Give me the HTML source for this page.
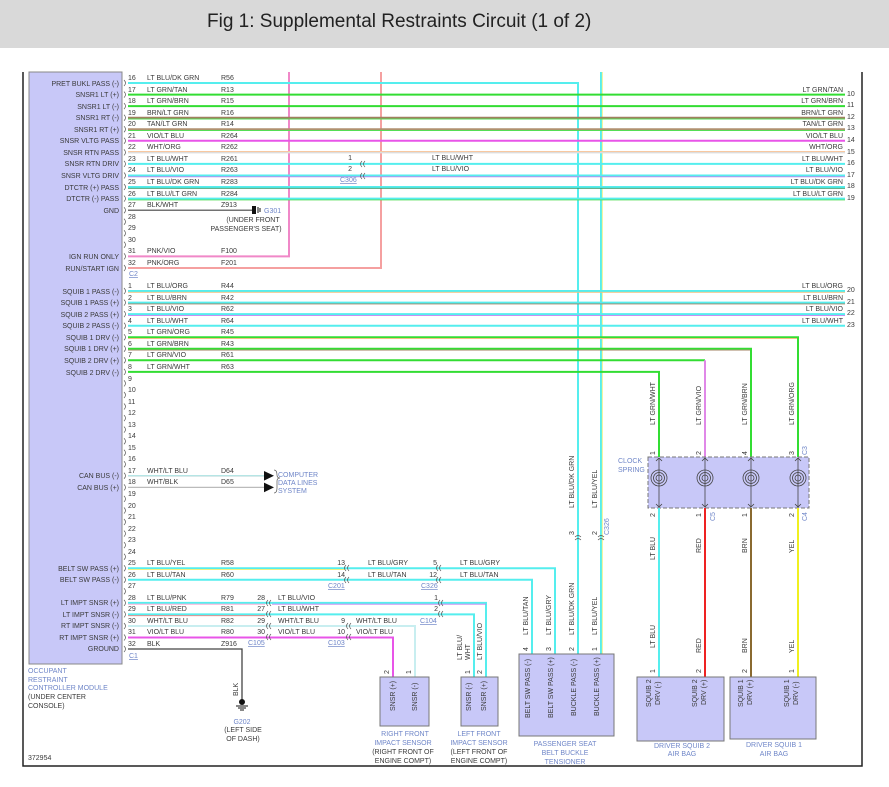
<!DOCTYPE html>
<html><head><meta charset="utf-8"><style>
html,body{margin:0;padding:0;background:#fff;width:889px;height:787px;overflow:hidden}
svg{display:block}
text{font-family:"Liberation Sans",Arial,sans-serif;font-size:7px;fill:#3a3a3a}
.b{fill:#6f86c8}
.w{fill:none;stroke-width:2}
.s{fill:none;stroke-width:0.9}
.r{text-anchor:end}
.m{text-anchor:middle}
.cn{fill:none;stroke:#555;stroke-width:0.7}
</style></head><body>
<svg width="889" height="787" viewBox="0 0 889 787">
<rect x="0" y="0" width="889" height="48" fill="#d9d9d9"/>
<text x="207" y="27" style="font-size:19px;fill:#222">Fig 1: Supplemental Restraints Circuit (1 of 2)</text>
<!-- frame -->
<path d="M23 72V766H862V72" fill="none" stroke="#222" stroke-width="1.5"/>
<rect x="29" y="72" width="93" height="592" fill="#c8c8f8" stroke="#888" stroke-width="1"/>
<!-- pin connector marks -->
<g class="cn">
<path d="M124 80q3 3 0 6M124 91.6q3 3 0 6M124 103.1q3 3 0 6M124 114.7q3 3 0 6M124 126.2q3 3 0 6M124 137.8q3 3 0 6M124 149.4q3 3 0 6M124 160.9q3 3 0 6M124 172.5q3 3 0 6M124 184q3 3 0 6M124 195.6q3 3 0 6M124 207.2q3 3 0 6M124 218.7q3 3 0 6M124 230.3q3 3 0 6M124 241.8q3 3 0 6M124 253.4q3 3 0 6M124 265q3 3 0 6"/>
<path d="M124 288q3 3 0 6M124 299.6q3 3 0 6M124 311.1q3 3 0 6M124 322.7q3 3 0 6M124 334.2q3 3 0 6M124 345.8q3 3 0 6M124 357.3q3 3 0 6M124 368.9q3 3 0 6M124 380.4q3 3 0 6M124 392q3 3 0 6M124 403.5q3 3 0 6M124 415.1q3 3 0 6M124 426.6q3 3 0 6M124 438.2q3 3 0 6M124 449.7q3 3 0 6M124 461.3q3 3 0 6M124 472.8q3 3 0 6M124 484.4q3 3 0 6M124 495.9q3 3 0 6M124 507.5q3 3 0 6M124 519q3 3 0 6M124 530.6q3 3 0 6M124 542.1q3 3 0 6M124 553.7q3 3 0 6M124 565.2q3 3 0 6M124 576.8q3 3 0 6M124 588.3q3 3 0 6M124 599.9q3 3 0 6M124 611.4q3 3 0 6M124 623q3 3 0 6M124 634.5q3 3 0 6M124 646q3 3 0 6"/>
</g>

<!-- C2 wires -->
<path class="w" stroke="#f5a0a0" d="M128 268H381V72"/>
<path class="w" stroke="#f088c8" d="M128 256.4H289V72"/>
<path class="w" stroke="#55eeee" d="M128 83H578V654"/>
<path class="w" stroke="#55eeee" d="M601 72V654"/>
<path class="s" stroke="#f0f080" d="M602.3 72V654"/>
<path class="w" stroke="#33dd33" d="M128 94.6H845"/>
<path class="w" stroke="#33dd33" d="M128 106.1H845"/>
<path class="w" stroke="#a08060" d="M128 117.7H845"/>
<path class="s" stroke="#55dd55" d="M128 119H845"/>
<path class="w" stroke="#b09070" d="M128 129.2H845"/>
<path class="s" stroke="#55dd55" d="M128 130.5H845"/>
<path class="w" stroke="#e855e8" d="M128 140.8H845"/>
<path class="w" stroke="#dddddd" d="M128 152.4H845"/>
<path class="s" stroke="#f8c8a0" d="M128 151.5H845"/>
<path class="w" stroke="#55eeee" d="M128 163.9H845"/>
<path class="w" stroke="#55eeee" d="M128 175.5H845"/>
<path class="s" stroke="#c080f0" d="M128 176.8H845"/>
<path class="w" stroke="#55eeee" d="M128 187H845"/>
<path class="s" stroke="#339966" d="M128 188.3H845"/>
<path class="w" stroke="#55eeee" d="M128 198.6H845"/>
<path class="s" stroke="#55dd55" d="M128 199.9H845"/>
<path d="M128 210.2H252" stroke="#444" stroke-width="1.2"/>
<rect x="252" y="206" width="4" height="8" fill="#111"/>
<path d="M258 207V213M260 208V212" stroke="#111"/>

<!-- C1 wires -->
<path class="w" stroke="#55eeee" d="M128 291H845"/><path class="s" stroke="#f0c080" d="M128 292.3H845"/>
<path class="w" stroke="#55eeee" d="M128 302.6H845"/><path class="s" stroke="#a08060" d="M128 303.9H845"/>
<path class="w" stroke="#55eeee" d="M128 314.1H845"/><path class="s" stroke="#c080f0" d="M128 315.4H845"/>
<path class="w" stroke="#55eeee" d="M128 325.7H845"/>
<path class="w" stroke="#33dd33" d="M128 337.2H798V457"/><path class="s" stroke="#f0c080" d="M128 338.5H797"/>
<path class="w" stroke="#33dd33" d="M128 348.8H751V457"/><path class="s" stroke="#a08060" d="M128 350.1H750"/>
<path class="w" stroke="#33dd33" d="M128 360.3H705"/><path class="w" stroke="#e088e8" d="M705 360.3V457"/>
<path class="w" stroke="#33dd33" d="M128 371.9H659V457"/>
<path d="M128 475.8H264M128 487.4H264" stroke="#bbb" stroke-width="1.3"/>
<path d="M128 475.8H264" stroke="#aeeeee" stroke-width="1"/>
<path d="M264 471l10 4.8-10 4.8zM264 482.6l10 4.8-10 4.8z" fill="#111"/>
<path d="M274 470q3 0 3 5q0 3 3 3q-3 0-3 3v7q0 5-3 5" class="cn"/>

<path class="w" stroke="#55eeee" d="M128 568.2H555V654"/><path class="s" stroke="#f0f080" d="M128 569.5H345"/>
<path class="w" stroke="#55eeee" d="M128 579.8H532V654"/>
<path class="w" stroke="#55eeee" d="M128 602.9H486V677"/><path class="s" stroke="#f8a0d0" d="M128 604.2H265"/><path class="s" stroke="#c080f0" d="M272 604.2H486"/>
<path class="w" stroke="#55eeee" d="M128 614.4H474V677"/><path class="s" stroke="#f08080" d="M128 615.7H265"/>
<path class="w" stroke="#c8eef0" d="M128 626H415V677"/>
<path class="w" stroke="#e855e8" d="M128 637.5H393V677"/>
<path d="M128 649H242V700" stroke="#444" stroke-width="1.3" fill="none"/>
<circle cx="242" cy="702" r="3" fill="#111"/><path d="M236 706H248M238 708H246M240 710H244" stroke="#111"/>

<!-- clock spring -->
<rect x="648" y="457" width="161" height="51" fill="#c8c8f8" stroke="#777" stroke-dasharray="4 2"/>
<g fill="none" stroke="#444" stroke-width="0.8">
<circle cx="659" cy="478" r="8"/><circle cx="659" cy="478" r="5.5"/><circle cx="659" cy="478" r="3"/>
<circle cx="705" cy="478" r="8"/><circle cx="705" cy="478" r="5.5"/><circle cx="705" cy="478" r="3"/>
<circle cx="751" cy="478" r="8"/><circle cx="751" cy="478" r="5.5"/><circle cx="751" cy="478" r="3"/>
<circle cx="798" cy="478" r="8"/><circle cx="798" cy="478" r="5.5"/><circle cx="798" cy="478" r="3"/>
<path d="M659 458V507M705 458V507M751 458V507M798 458V507"/>
<path d="M656 461l3-3 3 3M702 461l3-3 3 3M748 461l3-3 3 3M795 461l3-3 3 3M656 504l3 3 3-3M702 504l3 3 3-3M748 504l3 3 3-3M795 504l3 3 3-3"/>
</g>
<path class="w" stroke="#55eeee" d="M659 508V677"/>
<path class="w" stroke="#ee2222" d="M705 508V677"/>
<path class="w" stroke="#8a6a30" d="M751 508V677"/>
<path class="w" stroke="#f0f020" d="M798 508V677"/>

<!-- component boxes -->
<rect x="380" y="677" width="49" height="49" fill="#c8c8f8" stroke="#777"/>
<rect x="461" y="677" width="37" height="49" fill="#c8c8f8" stroke="#777"/>
<rect x="519" y="654" width="95" height="82" fill="#c8c8f8" stroke="#777"/>
<rect x="637" y="677" width="87" height="64" fill="#c8c8f8" stroke="#777"/>
<rect x="730" y="677" width="86" height="62" fill="#c8c8f8" stroke="#777"/>

<!-- in-line connector marks -->
<g class="cn">
<path d="M362 161q-3 3 0 6M362 173q-3 3 0 6M365 161q-3 3 0 6M365 173q-3 3 0 6"/>
<path d="M346 565q-3 3 0 6M349 565q-3 3 0 6M346 577q-3 3 0 6M349 577q-3 3 0 6M438 565q-3 3 0 6M441 565q-3 3 0 6M438 577q-3 3 0 6M441 577q-3 3 0 6"/>
<path d="M268 600q-3 3 0 6M271 600q-3 3 0 6M268 611q-3 3 0 6M271 611q-3 3 0 6M268 623q-3 3 0 6M271 623q-3 3 0 6M268 634q-3 3 0 6M271 634q-3 3 0 6"/>
<path d="M348 623q-3 3 0 6M351 623q-3 3 0 6M348 634q-3 3 0 6M351 634q-3 3 0 6M440 600q-3 3 0 6M443 600q-3 3 0 6M440 611q-3 3 0 6M443 611q-3 3 0 6"/>
<path d="M575 537q3-3 6 0M575 540q3-3 6 0M598 537q3-3 6 0M598 540q3-3 6 0"/>
</g>

<!-- left labels -->
<g class="r">
<text x="119" y="86">PRET BUKL PASS (-)</text><text x="119" y="97">SNSR1 LT (+)</text><text x="119" y="109">SNSR1 LT (-)</text><text x="119" y="120">SNSR1 RT (-)</text><text x="119" y="132">SNSR1 RT (+)</text><text x="119" y="143">SNSR VLTG PASS</text><text x="119" y="155">SNSR RTN PASS</text><text x="119" y="166">SNSR RTN DRIV</text><text x="119" y="178">SNSR VLTG DRIV</text><text x="119" y="190">DTCTR (+) PASS</text><text x="119" y="201">DTCTR (-) PASS</text><text x="119" y="213">GND</text><text x="119" y="259">IGN RUN ONLY</text><text x="119" y="271">RUN/START IGN</text>
<text x="119" y="294">SQUIB 1 PASS (-)</text><text x="119" y="305">SQUIB 1 PASS (+)</text><text x="119" y="317">SQUIB 2 PASS (+)</text><text x="119" y="328">SQUIB 2 PASS (-)</text><text x="119" y="340">SQUIB 1 DRV (-)</text><text x="119" y="351">SQUIB 1 DRV (+)</text><text x="119" y="363">SQUIB 2 DRV (+)</text><text x="119" y="375">SQUIB 2 DRV (-)</text>
<text x="119" y="478">CAN BUS (-)</text><text x="119" y="490">CAN BUS (+)</text>
<text x="119" y="571">BELT SW PASS (+)</text><text x="119" y="582">BELT SW PASS (-)</text>
<text x="119" y="605">LT IMPT SNSR (+)</text><text x="119" y="617">LT IMPT SNSR (-)</text><text x="119" y="628">RT IMPT SNSR (-)</text><text x="119" y="640">RT IMPT SNSR (+)</text><text x="119" y="651">GROUND</text>
</g>

<!-- C2 pin rows -->
<g>
<text x="128" y="80">16</text><text x="147" y="80">LT BLU/DK GRN</text><text x="221" y="80">R56</text>
<text x="128" y="92">17</text><text x="147" y="92">LT GRN/TAN</text><text x="221" y="92">R13</text>
<text x="128" y="103">18</text><text x="147" y="103">LT GRN/BRN</text><text x="221" y="103">R15</text>
<text x="128" y="115">19</text><text x="147" y="115">BRN/LT GRN</text><text x="221" y="115">R16</text>
<text x="128" y="126">20</text><text x="147" y="126">TAN/LT GRN</text><text x="221" y="126">R14</text>
<text x="128" y="138">21</text><text x="147" y="138">VIO/LT BLU</text><text x="221" y="138">R264</text>
<text x="128" y="149">22</text><text x="147" y="149">WHT/ORG</text><text x="221" y="149">R262</text>
<text x="128" y="161">23</text><text x="147" y="161">LT BLU/WHT</text><text x="221" y="161">R261</text>
<text x="128" y="172">24</text><text x="147" y="172">LT BLU/VIO</text><text x="221" y="172">R263</text>
<text x="128" y="184">25</text><text x="147" y="184">LT BLU/DK GRN</text><text x="221" y="184">R283</text>
<text x="128" y="196">26</text><text x="147" y="196">LT BLU/LT GRN</text><text x="221" y="196">R284</text>
<text x="128" y="207">27</text><text x="147" y="207">BLK/WHT</text><text x="221" y="207">Z913</text>
<text x="128" y="219">28</text><text x="128" y="230">29</text><text x="128" y="242">30</text>
<text x="128" y="253">31</text><text x="147" y="253">PNK/VIO</text><text x="221" y="253">F100</text>
<text x="128" y="265">32</text><text x="147" y="265">PNK/ORG</text><text x="221" y="265">F201</text>
<text x="129" y="276" class="b" style="text-decoration:underline">C2</text>
<text x="264" y="213" class="b">G301</text>
<text x="253" y="222" class="m">(UNDER FRONT</text><text x="246" y="231" class="m">PASSENGER'S SEAT)</text>
<text x="352" y="160" class="r">1</text><text x="352" y="171" class="r">2</text>
<text x="340" y="182" class="b" style="text-decoration:underline">C306</text>
<text x="432" y="160">LT BLU/WHT</text><text x="432" y="171">LT BLU/VIO</text>
</g>

<!-- C1 pin rows -->
<g>
<text x="128" y="288">1</text><text x="147" y="288">LT BLU/ORG</text><text x="221" y="288">R44</text>
<text x="128" y="300">2</text><text x="147" y="300">LT BLU/BRN</text><text x="221" y="300">R42</text>
<text x="128" y="311">3</text><text x="147" y="311">LT BLU/VIO</text><text x="221" y="311">R62</text>
<text x="128" y="323">4</text><text x="147" y="323">LT BLU/WHT</text><text x="221" y="323">R64</text>
<text x="128" y="334">5</text><text x="147" y="334">LT GRN/ORG</text><text x="221" y="334">R45</text>
<text x="128" y="346">6</text><text x="147" y="346">LT GRN/BRN</text><text x="221" y="346">R43</text>
<text x="128" y="357">7</text><text x="147" y="357">LT GRN/VIO</text><text x="221" y="357">R61</text>
<text x="128" y="369">8</text><text x="147" y="369">LT GRN/WHT</text><text x="221" y="369">R63</text>
<text x="128" y="381">9</text><text x="128" y="392">10</text><text x="128" y="404">11</text><text x="128" y="415">12</text><text x="128" y="427">13</text><text x="128" y="438">14</text><text x="128" y="450">15</text><text x="128" y="461">16</text>
<text x="128" y="473">17</text><text x="147" y="473">WHT/LT BLU</text><text x="221" y="473">D64</text>
<text x="128" y="484">18</text><text x="147" y="484">WHT/BLK</text><text x="221" y="484">D65</text>
<text x="128" y="496">19</text><text x="128" y="508">20</text><text x="128" y="519">21</text><text x="128" y="531">22</text><text x="128" y="542">23</text><text x="128" y="554">24</text>
<text x="128" y="565">25</text><text x="147" y="565">LT BLU/YEL</text><text x="221" y="565">R58</text>
<text x="128" y="577">26</text><text x="147" y="577">LT BLU/TAN</text><text x="221" y="577">R60</text>
<text x="128" y="588">27</text>
<text x="128" y="600">28</text><text x="147" y="600">LT BLU/PNK</text><text x="221" y="600">R79</text>
<text x="128" y="611">29</text><text x="147" y="611">LT BLU/RED</text><text x="221" y="611">R81</text>
<text x="128" y="623">30</text><text x="147" y="623">WHT/LT BLU</text><text x="221" y="623">R82</text>
<text x="128" y="634">31</text><text x="147" y="634">VIO/LT BLU</text><text x="221" y="634">R80</text>
<text x="128" y="646">32</text><text x="147" y="646">BLK</text><text x="221" y="646">Z916</text>
<text x="129" y="658" class="b" style="text-decoration:underline">C1</text>
<text x="278" y="477" class="b">COMPUTER</text><text x="278" y="485" class="b">DATA LINES</text><text x="278" y="493" class="b">SYSTEM</text>

<text x="345" y="565" class="r">13</text><text x="345" y="577" class="r">14</text>
<text x="368" y="565">LT BLU/GRY</text><text x="368" y="577">LT BLU/TAN</text>
<text x="328" y="588" class="b" style="text-decoration:underline">C201</text>
<text x="437" y="565" class="r">5</text><text x="437" y="577" class="r">12</text>
<text x="460" y="565">LT BLU/GRY</text><text x="460" y="577">LT BLU/TAN</text>
<text x="421" y="588" class="b" style="text-decoration:underline">C326</text>
<text x="265" y="600" class="r">28</text><text x="265" y="611" class="r">27</text><text x="265" y="623" class="r">29</text><text x="265" y="634" class="r">30</text>
<text x="278" y="600">LT BLU/VIO</text><text x="278" y="611">LT BLU/WHT</text><text x="278" y="623">WHT/LT BLU</text><text x="278" y="634">VIO/LT BLU</text>
<text x="248" y="645" class="b" style="text-decoration:underline">C105</text>
<text x="345" y="623" class="r">9</text><text x="345" y="634" class="r">10</text>
<text x="356" y="623">WHT/LT BLU</text><text x="356" y="634">VIO/LT BLU</text>
<text x="328" y="645" class="b" style="text-decoration:underline">C103</text>
<text x="438" y="600" class="r">1</text><text x="438" y="611" class="r">2</text>
<text x="420" y="623" class="b" style="text-decoration:underline">C104</text>
</g>

<!-- right labels -->
<g class="r">
<text x="843" y="92">LT GRN/TAN</text><text x="843" y="103">LT GRN/BRN</text><text x="843" y="115">BRN/LT GRN</text><text x="843" y="126">TAN/LT GRN</text><text x="843" y="138">VIO/LT BLU</text><text x="843" y="149">WHT/ORG</text><text x="843" y="161">LT BLU/WHT</text><text x="843" y="172">LT BLU/VIO</text><text x="843" y="184">LT BLU/DK GRN</text><text x="843" y="196">LT BLU/LT GRN</text>
<text x="843" y="288">LT BLU/ORG</text><text x="843" y="300">LT BLU/BRN</text><text x="843" y="311">LT BLU/VIO</text><text x="843" y="323">LT BLU/WHT</text>
</g>
<g>
<text x="847" y="96">10</text><text x="847" y="107">11</text><text x="847" y="119">12</text><text x="847" y="130">13</text><text x="847" y="142">14</text><text x="847" y="154">15</text><text x="847" y="165">16</text><text x="847" y="177">17</text><text x="847" y="188">18</text><text x="847" y="200">19</text>
<text x="847" y="292">20</text><text x="847" y="304">21</text><text x="847" y="315">22</text><text x="847" y="327">23</text>
</g>

<!-- module and ground labels -->
<text x="28" y="673" class="b">OCCUPANT</text><text x="28" y="682" class="b">RESTRAINT</text><text x="28" y="690" class="b">CONTROLLER MODULE</text>
<text x="28" y="699">(UNDER CENTER</text><text x="28" y="708">CONSOLE)</text>
<text x="28" y="760">372954</text>
<text x="242" y="724" class="m b">G202</text><text x="243" y="732" class="m">(LEFT SIDE</text><text x="243" y="741" class="m">OF DASH)</text>
<text x="405" y="736" class="m b">RIGHT FRONT</text><text x="403" y="745" class="m b">IMPACT SENSOR</text><text x="403" y="754" class="m">(RIGHT FRONT OF</text><text x="403" y="763" class="m">ENGINE COMPT)</text>
<text x="479" y="736" class="m b">LEFT FRONT</text><text x="479" y="745" class="m b">IMPACT SENSOR</text><text x="479" y="754" class="m">(LEFT FRONT OF</text><text x="479" y="763" class="m">ENGINE COMPT)</text>
<text x="565" y="746" class="m b">PASSENGER SEAT</text><text x="565" y="755" class="m b">BELT BUCKLE</text><text x="565" y="764" class="m b">TENSIONER</text>
<text x="682" y="748" class="m b">DRIVER SQUIB 2</text><text x="682" y="756" class="m b">AIR BAG</text>
<text x="774" y="747" class="m b">DRIVER SQUIB 1</text><text x="774" y="756" class="m b">AIR BAG</text>
<text x="618" y="463" class="b">CLOCK</text><text x="618" y="472" class="b">SPRING</text>

<!-- rotated labels -->
<g>
<text transform="translate(238,696) rotate(-90)">BLK</text>
<text transform="translate(655,425) rotate(-90)">LT GRN/WHT</text>
<text transform="translate(701,425) rotate(-90)">LT GRN/VIO</text>
<text transform="translate(747,425) rotate(-90)">LT GRN/BRN</text>
<text transform="translate(794,425) rotate(-90)">LT GRN/ORG</text>
<text transform="translate(655,455) rotate(-90)">1</text><text transform="translate(701,455) rotate(-90)">2</text><text transform="translate(747,455) rotate(-90)">4</text><text transform="translate(794,455) rotate(-90)">3</text>
<text transform="translate(807,455) rotate(-90)" class="b">C3</text>
<text transform="translate(655,517) rotate(-90)">2</text><text transform="translate(701,517) rotate(-90)">1</text><text transform="translate(747,517) rotate(-90)">1</text><text transform="translate(794,517) rotate(-90)">2</text>
<text transform="translate(715,521) rotate(-90)" class="b">C5</text><text transform="translate(807,521) rotate(-90)" class="b">C4</text>
<text transform="translate(655,560) rotate(-90)">LT BLU</text>
<text transform="translate(701,553) rotate(-90)">RED</text>
<text transform="translate(747,553) rotate(-90)">BRN</text>
<text transform="translate(794,553) rotate(-90)">YEL</text>
<text transform="translate(574,508) rotate(-90)">LT BLU/DK GRN</text>
<text transform="translate(597,508) rotate(-90)">LT BLU/YEL</text>
<text transform="translate(574,535) rotate(-90)">3</text><text transform="translate(597,535) rotate(-90)">2</text>
<text transform="translate(609,535) rotate(-90)" class="b">C326</text>
<text transform="translate(528,635) rotate(-90)">LT BLU/TAN</text>
<text transform="translate(551,635) rotate(-90)">LT BLU/GRY</text>
<text transform="translate(574,635) rotate(-90)">LT BLU/DK GRN</text>
<text transform="translate(597,635) rotate(-90)">LT BLU/YEL</text>
<text transform="translate(528,651) rotate(-90)">4</text><text transform="translate(551,651) rotate(-90)">3</text><text transform="translate(574,651) rotate(-90)">2</text><text transform="translate(597,651) rotate(-90)">1</text>
<text transform="translate(530,718) rotate(-90)">BELT SW PASS (-)</text>
<text transform="translate(553,718) rotate(-90)">BELT SW PASS (+)</text>
<text transform="translate(576,716) rotate(-90)">BUCKLE PASS (-)</text>
<text transform="translate(599,716) rotate(-90)">BUCKLE PASS (+)</text>
<text transform="translate(462,660) rotate(-90)">LT BLU/</text>
<text transform="translate(470,660) rotate(-90)">WHT</text>
<text transform="translate(482,660) rotate(-90)">LT BLU/VIO</text>
<text transform="translate(470,674) rotate(-90)">1</text><text transform="translate(482,674) rotate(-90)">2</text>
<text transform="translate(471,711) rotate(-90)">SNSR (-)</text><text transform="translate(486,711) rotate(-90)">SNSR (+)</text>
<text transform="translate(389,674) rotate(-90)">2</text><text transform="translate(411,674) rotate(-90)">1</text>
<text transform="translate(395,711) rotate(-90)">SNSR (+)</text><text transform="translate(417,711) rotate(-90)">SNSR (-)</text>
<text transform="translate(655,648) rotate(-90)">LT BLU</text><text transform="translate(701,653) rotate(-90)">RED</text><text transform="translate(747,653) rotate(-90)">BRN</text><text transform="translate(794,653) rotate(-90)">YEL</text>
<text transform="translate(655,673) rotate(-90)">1</text><text transform="translate(701,673) rotate(-90)">2</text><text transform="translate(747,673) rotate(-90)">2</text><text transform="translate(794,673) rotate(-90)">1</text>
<text transform="translate(651,707) rotate(-90)">SQUIB 2</text><text transform="translate(660,705) rotate(-90)">DRV (-)</text>
<text transform="translate(697,707) rotate(-90)">SQUIB 2</text><text transform="translate(706,705) rotate(-90)">DRV (+)</text>
<text transform="translate(743,707) rotate(-90)">SQUIB 1</text><text transform="translate(752,705) rotate(-90)">DRV (+)</text>
<text transform="translate(789,707) rotate(-90)">SQUIB 1</text><text transform="translate(798,705) rotate(-90)">DRV (-)</text>
</g>
</svg>
</body></html>
